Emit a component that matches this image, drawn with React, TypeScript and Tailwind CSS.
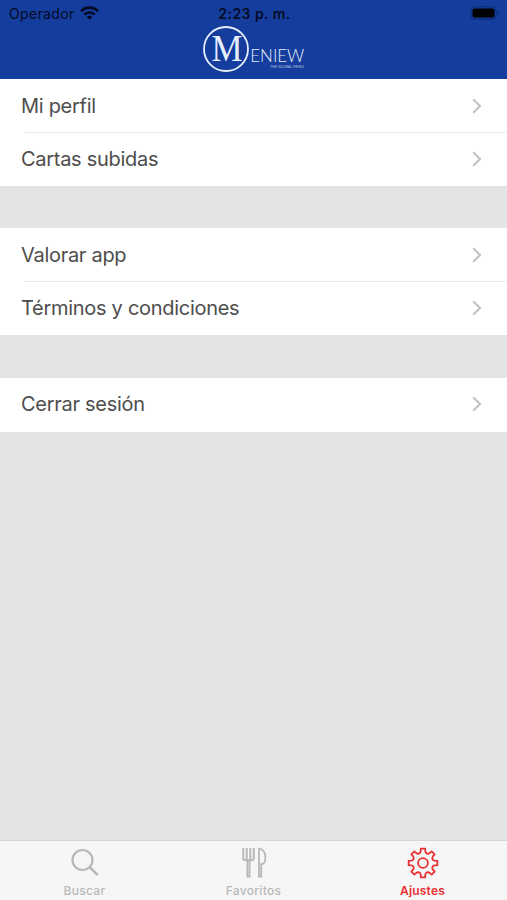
import clsx from "clsx";
import type { ReactNode } from "react";

const sections = [
  ["Mi perfil", "Cartas subidas"],
  ["Valorar app", "Términos y condiciones"],
  ["Cerrar sesión"],
];

function StatusBar() {
  return (
    <div className="grid h-[27px] grid-cols-3 items-center pl-[9px] pr-[7px] text-[#050b24]">
      <div className="flex items-center gap-[5px]">
        <span className="text-[14px] leading-none tracking-[0.35px]">Operador</span>
        <svg className="-mt-[2px]" width="19" height="14" viewBox="0 0 19 14" fill="none" stroke="currentColor" strokeWidth="2.8">
          <path d="M1 5.2a12 12 0 0 1 17 0" />
          <path d="M4.2 8.7a7.5 7.5 0 0 1 10.6 0" strokeWidth="2.4" />
          <path d="M6.7 11a4 4 0 0 1 5.6 0L9.5 13.8z" fill="currentColor" stroke="none" />
        </svg>
      </div>
      <span className="text-center text-[14px] font-semibold leading-none tracking-[0.45px]">2:23 p. m.</span>
      <svg className="-mt-[1px] justify-self-end" width="30" height="14" viewBox="0 0 30 14">
        <rect x="0.8" y="0.8" width="25.4" height="12.4" rx="4" fill="none" stroke="#0c2a76" strokeWidth="1" />
        <rect x="2.5" y="2.5" width="22" height="9" rx="2" fill="#000" />
        <path d="M27.5 5v4a2.4 2.4 0 0 0 0-4z" fill="#0c2a76" />
      </svg>
    </div>
  );
}

function Logo() {
  return (
    <svg className="mx-auto overflow-visible" width="106" height="48" viewBox="-1 0 106 48" fill="#e6eefc">
      <circle cx="24" cy="24" r="22" fill="none" stroke="#e6eefc" strokeWidth="1.8" />
      <text x="9.5" y="35.7" fontSize="37" textLength="31" lengthAdjust="spacingAndGlyphs" fontFamily="Liberation Serif, serif">
        M
      </text>
      <text x="48.3" y="36.7" fontSize="18" fontWeight="300" textLength="54" lengthAdjust="spacingAndGlyphs" fontFamily="Lato, sans-serif">
        ENIEW
      </text>
      <text x="68" y="43" fontSize="4" opacity="0.7" textLength="34" lengthAdjust="spacingAndGlyphs" fontFamily="Lato, sans-serif">
        THE GLOBAL MENU
      </text>
    </svg>
  );
}

function Row({ label, divided }: { label: string; divided: boolean }) {
  return (
    <div>
      {divided && <div className="ml-[25px] h-px bg-[#e9e9e9]" />}
      <div className={clsx("flex h-[53px] items-center justify-between pl-[21px] pr-[25px]", divided && "pb-[1.5px]")}>
        <span className="text-[20px] leading-none tracking-[-0.29px] text-[#4d4d4d]">{label}</span>
        <svg width="10" height="16" viewBox="0 0 10 16" fill="none" stroke="#c4c4c4" strokeWidth="2.2">
          <path d="M1.2 1.2 8 8l-6.8 6.8" />
        </svg>
      </div>
    </div>
  );
}

function SearchIcon() {
  return (
    <svg width="32" height="32" viewBox="0 0 32 32" fill="none" stroke="currentColor" strokeWidth="2.2">
      <circle cx="13.5" cy="13" r="10" />
      <path d="m20.7 20.2 8 8" strokeWidth="2.6" />
    </svg>
  );
}

function CutleryIcon() {
  return (
    <svg width="32" height="32" viewBox="0 0 32 32" fill="none" stroke="currentColor" strokeWidth="2">
      <path d="M5.2 1v10c0 1.6.8 2.2 2.2 2.2h6.2c1.4 0 2.2-.6 2.2-2.2V1M8.7 1v12M12.3 1v12" />
      <path d="M9.4 13v16.600h2.200V13" strokeWidth="1.8" />
      <path d="M21 29.600V1.700c3.800.2 6.400 3.700 6.400 8.200 0 4.500-1.700 7.300-4.200 7.300v12.400z" strokeWidth="1.8" />
    </svg>
  );
}

function polar(degrees: number, radius: number) {
  const angle = ((degrees - 90) * Math.PI) / 180;
  return `${(16 + radius * Math.cos(angle)).toFixed(2)} ${(16 + radius * Math.sin(angle)).toFixed(2)}`;
}

// eight flat teeth joined by rounded valleys
function gearPath() {
  let d = "";
  for (let a = 0; a < 360; a += 45) {
    d += `${a === 0 ? "M" : "L"}${polar(a - 8.5, 14.5)}L${polar(a + 8.5, 14.5)}L${polar(a + 11, 12)}`;
    d += `C${polar(a + 15, 9.8)} ${polar(a + 30, 9.8)} ${polar(a + 34, 12)}`;
  }
  return `${d}Z`;
}

function GearIcon() {
  return (
    <svg width="32" height="32" viewBox="0 0 32 32" fill="none" stroke="currentColor" strokeWidth="1.8" strokeLinejoin="round">
      <path d={gearPath()} />
      <circle cx="16" cy="16" r="4.9" />
    </svg>
  );
}

function Tab({ label, icon, active }: { label: string; icon: ReactNode; active?: boolean }) {
  return (
    <div className={clsx("flex flex-1 flex-col items-center pt-[6px]", active ? "text-[#eb2f32]" : "text-[#b8b8b8]")}>
      {icon}
      <span className={clsx("mt-[6px] text-[12px] leading-none", active ? "font-semibold tracking-[0.2px]" : "font-medium tracking-[0.3px]")}>
        {label}
      </span>
    </div>
  );
}

export default function App() {
  return (
    <div className="flex h-screen flex-col overflow-hidden bg-[#e4e4e4] font-['Inter',sans-serif]">
      <header className="h-[79px] bg-[#143d9d]">
        <StatusBar />
        <div className="-mt-[2px]">
          <Logo />
        </div>
      </header>

      <main className="flex flex-1 flex-col gap-[42.4px]">
        {sections.map((rows) => (
          <section key={rows[0]} className="bg-white last:pb-px">
            {rows.map((label, i) => (
              <Row key={label} label={label} divided={i > 0} />
            ))}
          </section>
        ))}
      </main>

      <nav className="flex h-[60px] border-t border-[#d6d6d6] bg-[#f6f6f6]">
        <Tab label="Buscar" icon={<SearchIcon />} />
        <Tab label="Favoritos" icon={<CutleryIcon />} />
        <Tab label="Ajustes" icon={<GearIcon />} active />
      </nav>
    </div>
  );
}
